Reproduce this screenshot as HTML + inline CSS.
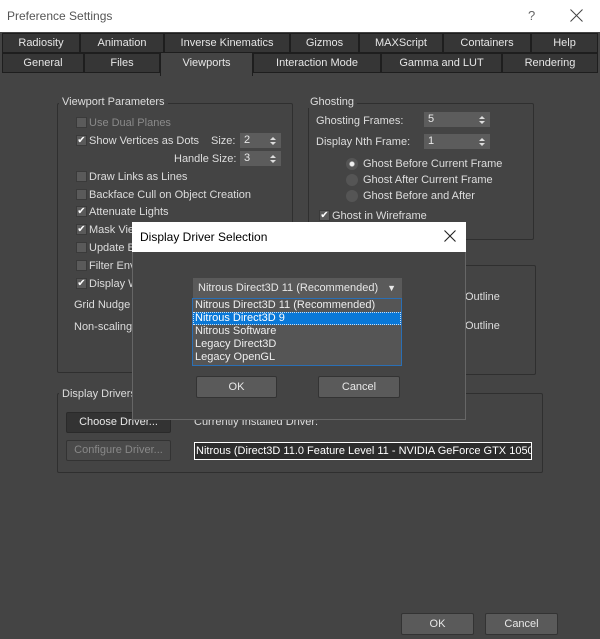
<!DOCTYPE html>
<html><head><style>
*{box-sizing:border-box;margin:0;padding:0}
body{width:600px;height:639px;background:#444;font-family:"Liberation Sans",sans-serif;font-size:11px;color:#ddd;position:relative;overflow:hidden}
.a{position:absolute;white-space:nowrap}
.tab{position:absolute;height:20px;border:1px solid #1e1e1e;background:#363636;color:#e6e6e6;text-align:center;line-height:19px;font-size:11px}
.grp{position:absolute;border:1px solid #2f2f2f;border-radius:2px}
.lbl{position:absolute;background:#444;padding:0 3px;white-space:nowrap}
.cb{position:absolute;width:11px;height:11px;background:#5a5a5a;border:1px solid #3a3a3a;font-size:10px;line-height:9px;color:#fff;text-align:center}
.spin{position:absolute;height:15px;background:#5c5c5c;color:#e8e8e8;padding-left:4px;line-height:15px}
.spin:after{content:"";position:absolute;right:5px;top:4px;border-left:3px solid transparent;border-right:3px solid transparent;border-bottom:3px solid #ddd}
.spin:before{content:"";position:absolute;right:5px;top:9px;border-left:3px solid transparent;border-right:3px solid transparent;border-top:3px solid #ddd}
.rad{position:absolute;width:12px;height:12px;border-radius:50%;background:#555}
.btn{position:absolute;background:#5a5a5a;border:1px solid #333;border-radius:2px;text-align:center;color:#e8e8e8}
</style></head><body>
<div class="a" style="left:0;top:0;width:600px;height:32px;background:#fff;"></div>
<div class="a" style="left:7px;top:9px;color:#555;font-size:12px">Preference Settings</div>
<div class="a" style="left:528px;top:8px;color:#666;font-size:13px">?</div>
<svg class="a" style="left:570px;top:9px" width="13" height="13"><path d="M0.5 0.5L12.5 12.5M12.5 0.5L0.5 12.5" stroke="#444" stroke-width="1"/></svg>

<div class="tab" style="left:2px;top:33px;width:78px">Radiosity</div>
<div class="tab" style="left:80px;top:33px;width:84px">Animation</div>
<div class="tab" style="left:164px;top:33px;width:126px">Inverse Kinematics</div>
<div class="tab" style="left:290px;top:33px;width:69px">Gizmos</div>
<div class="tab" style="left:359px;top:33px;width:84px">MAXScript</div>
<div class="tab" style="left:443px;top:33px;width:88px">Containers</div>
<div class="tab" style="left:531px;top:33px;width:67px">Help</div>
<div class="tab" style="left:2px;top:53px;width:82px">General</div>
<div class="tab" style="left:84px;top:53px;width:76px">Files</div>
<div class="tab" style="left:160px;top:52px;width:93px;height:24px;background:#444;border-bottom:none;line-height:21px">Viewports</div>
<div class="tab" style="left:253px;top:53px;width:128px">Interaction Mode</div>
<div class="tab" style="left:381px;top:53px;width:121px">Gamma and LUT</div>
<div class="tab" style="left:502px;top:53px;width:96px">Rendering</div>

<div class="grp" style="left:57px;top:103px;width:236px;height:270px"></div>
<div class="lbl" style="left:59px;top:96px">Viewport Parameters</div>
<div class="cb" style="left:76px;top:117px"></div><div class="a" style="left:89px;top:117px;color:#8a8a8a">Use Dual Planes</div>
<div class="cb" style="left:76px;top:135px">✔</div><div class="a" style="left:89px;top:135px">Show Vertices as Dots</div>
<div class="a" style="left:211px;top:135px">Size:</div><div class="spin" style="left:240px;top:133px;width:41px">2</div>
<div class="a" style="left:174px;top:153px">Handle Size:</div><div class="spin" style="left:240px;top:151px;width:41px">3</div>
<div class="cb" style="left:76px;top:171px"></div><div class="a" style="left:89px;top:171px">Draw Links as Lines</div>
<div class="cb" style="left:76px;top:189px"></div><div class="a" style="left:89px;top:189px">Backface Cull on Object Creation</div>
<div class="cb" style="left:76px;top:206px">✔</div><div class="a" style="left:89px;top:206px">Attenuate Lights</div>
<div class="cb" style="left:76px;top:224px">✔</div><div class="a" style="left:89px;top:224px">Mask View</div>
<div class="cb" style="left:76px;top:242px"></div><div class="a" style="left:89px;top:242px">Update B</div>
<div class="cb" style="left:76px;top:260px"></div><div class="a" style="left:89px;top:260px">Filter Env</div>
<div class="cb" style="left:76px;top:278px">✔</div><div class="a" style="left:89px;top:278px">Display W</div>
<div class="a" style="left:74px;top:299px">Grid Nudge</div>
<div class="a" style="left:74px;top:321px">Non-scaling</div>

<div class="grp" style="left:308px;top:103px;width:226px;height:137px"></div>
<div class="lbl" style="left:307px;top:96px">Ghosting</div>
<div class="a" style="left:316px;top:115px">Ghosting Frames:</div><div class="spin" style="left:424px;top:112px;width:66px">5</div>
<div class="a" style="left:316px;top:136px">Display Nth Frame:</div><div class="spin" style="left:424px;top:134px;width:66px">1</div>
<div class="rad" style="left:346px;top:158px;background:radial-gradient(#eee 2px,#555 3px)"></div><div class="a" style="left:363px;top:158px">Ghost Before Current Frame</div>
<div class="rad" style="left:346px;top:174px"></div><div class="a" style="left:363px;top:174px">Ghost After Current Frame</div>
<div class="rad" style="left:346px;top:190px"></div><div class="a" style="left:363px;top:190px">Ghost Before and After</div>
<div class="cb" style="left:319px;top:210px">✔</div><div class="a" style="left:332px;top:210px">Ghost in Wireframe</div>

<div class="grp" style="left:440px;top:265px;width:96px;height:110px"></div>
<div class="a" style="left:465px;top:291px">Outline</div>
<div class="a" style="left:465px;top:320px">Outline</div>

<div class="grp" style="left:57px;top:393px;width:486px;height:80px"></div>
<div class="lbl" style="left:59px;top:388px">Display Drivers</div>
<div class="btn" style="left:66px;top:412px;width:105px;height:21px;line-height:19px;background:#333;border-color:#2a2a2a">Choose Driver...</div>
<div class="btn" style="left:66px;top:440px;width:105px;height:21px;line-height:19px;color:#888;background:#4a4a4a">Configure Driver...</div>
<div class="a" style="left:194px;top:416px">Currently Installed Driver:</div>
<div class="a" style="left:194px;top:442px;width:338px;height:18px;border:1px solid #fff;background:#2c2c2c;color:#fff;padding-left:1px;line-height:16px;overflow:hidden">Nitrous (Direct3D 11.0 Feature Level 11 - NVIDIA GeForce GTX 1050 Ti</div>

<div class="a" style="left:132px;top:222px;width:334px;height:198px;background:#444;border:1px solid #666"></div>
<div class="a" style="left:132px;top:222px;width:334px;height:30px;background:#fff"></div>
<div class="a" style="left:140px;top:230px;color:#000;font-size:12px">Display Driver Selection</div>
<svg class="a" style="left:444px;top:230px" width="12" height="12"><path d="M0.5 0.5L11.5 11.5M11.5 0.5L0.5 11.5" stroke="#222" stroke-width="1.1"/></svg>
<div class="a" style="left:193px;top:278px;width:209px;height:20px;background:#5a5a5a;line-height:20px;padding-left:5px;color:#e8e8e8">Nitrous Direct3D 11 (Recommended)<span style="position:absolute;right:6px;font-size:9px">▼</span></div>
<div class="a" style="left:192px;top:298px;width:210px;height:68px;background:#555;border:1px solid #2a6fb5;line-height:13px;color:#eee">
<div style="padding-left:2px">Nitrous Direct3D 11 (Recommended)</div>
<div style="padding-left:2px;background:#0a78d7;color:#fff;outline:1px dotted #cde;outline-offset:-1px">Nitrous Direct3D 9</div>
<div style="padding-left:2px">Nitrous Software</div>
<div style="padding-left:2px">Legacy Direct3D</div>
<div style="padding-left:2px">Legacy OpenGL</div></div>
<div class="btn" style="left:196px;top:376px;width:81px;height:22px;line-height:20px">OK</div>
<div class="btn" style="left:318px;top:376px;width:82px;height:22px;line-height:20px">Cancel</div>

<div class="btn" style="left:401px;top:613px;width:73px;height:22px;line-height:20px">OK</div>
<div class="btn" style="left:485px;top:613px;width:73px;height:22px;line-height:20px">Cancel</div>
</body></html>
